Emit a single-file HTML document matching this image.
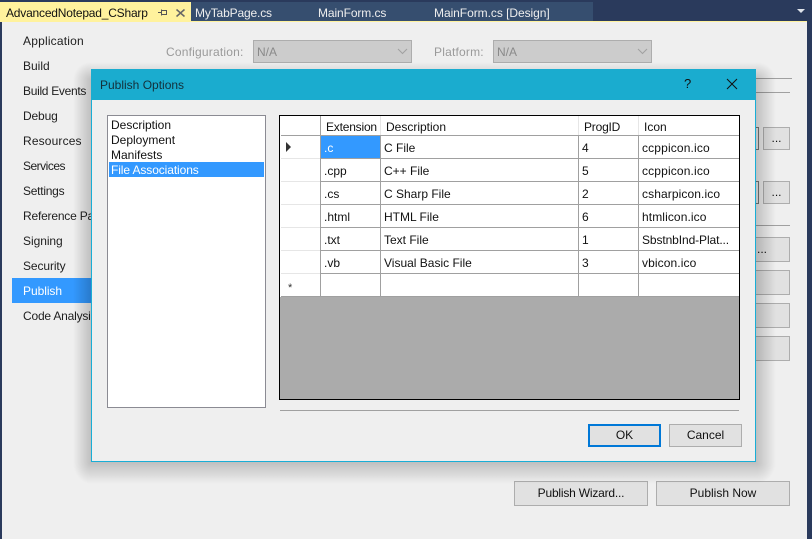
<!DOCTYPE html>
<html><head><meta charset="utf-8">
<style>
html,body{margin:0;padding:0}
body{width:812px;height:539px;overflow:hidden;position:relative;background:#2a3a5c;font:12px "Liberation Sans",sans-serif;color:#1e1e1e;letter-spacing:0}
.a,.a *{box-sizing:border-box}
.a{position:absolute}
.t{position:absolute;white-space:nowrap;line-height:16px;height:16px}
.btn{position:absolute;background:#e1e1e1;border:1px solid #adadad;text-align:center;box-sizing:border-box;color:#111}
.l{position:absolute;background:#a0a0a0}
.d{position:absolute;background:#ccc;border:1px solid #adadad;box-sizing:border-box;color:#8a8a8a;padding:3px 0 0 3px;line-height:16px}
.b{position:absolute;background:#19aed6}
</style></head><body>
<div class="a" style="left:0;top:2px;width:191px;height:20px;background:#fff29d"></div>
<div class="a" style="left:191px;top:2px;width:402px;height:19px;background:#364e6f"></div>
<div class="t" style="left:6px;top:5px;color:#111;letter-spacing:-.2px">AdvancedNotepad_CSharp</div>
<svg class="a" style="left:156px;top:6px" width="32" height="14"><path d="M2 6.500H5M5.500 3.500V9.500M5.500 4.500H10.500V8.500H5.500" fill="none" stroke="#555" stroke-width="1"/><path d="M20.500 3.500L28.500 10.500M28.500 3.500L20.500 10.500" stroke="#666" stroke-width="1.500" fill="none"/></svg>
<div class="t" style="left:195px;top:5px;color:#eee;letter-spacing:-.15px">MyTabPage.cs</div>
<div class="t" style="left:318px;top:5px;color:#eee;letter-spacing:-.1px">MainForm.cs</div>
<div class="t" style="left:434px;top:5px;color:#eee;letter-spacing:-.05px">MainForm.cs [Design]</div>
<svg class="a" style="left:797px;top:9px" width="10" height="6"><path d="M0 0H8L4 4Z" fill="#dfe3ea"/></svg>

<div class="a" style="left:2px;top:21px;width:805px;height:518px;background:#efefef"></div>
<div class="a" style="left:2px;top:21px;width:805px;height:1px;background:#fff29d"></div>

<div class="a" style="left:12px;top:278px;width:90px;height:25px;background:#39f"></div>
<div class="t" style="left:23px;top:33px;letter-spacing:.2px">Application</div>
<div class="t" style="left:23px;top:58px">Build</div>
<div class="t" style="left:23px;top:83px;letter-spacing:-.3px">Build Events</div>
<div class="t" style="left:23px;top:108px;letter-spacing:-.15px">Debug</div>
<div class="t" style="left:23px;top:133px;letter-spacing:.15px">Resources</div>
<div class="t" style="left:23px;top:158px;letter-spacing:-.5px">Services</div>
<div class="t" style="left:23px;top:183px;letter-spacing:-.25px">Settings</div>
<div class="t" style="left:23px;top:208px;letter-spacing:-.2px">Reference Paths</div>
<div class="t" style="left:23px;top:233px;letter-spacing:-.05px">Signing</div>
<div class="t" style="left:23px;top:258px;letter-spacing:-.1px">Security</div>
<div class="t" style="left:23px;top:283px;color:#fff;letter-spacing:-.05px">Publish</div>
<div class="t" style="left:23px;top:308px;letter-spacing:-.2px">Code Analysis</div>

<div class="t" style="left:166px;top:44px;color:#9a9a9a;letter-spacing:.2px">Configuration:</div>
<div class="d" style="left:253px;top:40px;width:159px;height:23px">N/A</div>
<svg class="a" style="left:397px;top:48px" width="12" height="8"><path d="M1 1L5.500 5.500L10 1" stroke="#a0a0a0" fill="none"/></svg>
<div class="t" style="left:434px;top:44px;color:#9a9a9a;letter-spacing:.2px">Platform:</div>
<div class="d" style="left:493px;top:40px;width:159px;height:23px">N/A</div>
<svg class="a" style="left:637px;top:48px" width="12" height="8"><path d="M1 1L5.500 5.500L10 1" stroke="#a0a0a0" fill="none"/></svg>

<div class="l" style="left:700px;top:78px;width:92px;height:1px"></div>
<div class="l" style="left:700px;top:92px;width:90px;height:1px"></div>
<div class="a" style="left:700px;top:127px;width:59px;height:23px;border:1px solid #7a7a7a;background:#efefef"></div>
<div class="a" style="left:700px;top:181px;width:59px;height:23px;border:1px solid #7a7a7a;background:#efefef"></div>
<div class="btn" style="left:763px;top:127px;width:27px;height:23px;line-height:20px">...</div>
<div class="btn" style="left:763px;top:181px;width:27px;height:23px;line-height:20px">...</div>
<div class="l" style="left:700px;top:225px;width:90px;height:1px"></div>
<div class="btn" style="left:700px;top:237px;width:90px;height:25px;line-height:23px;text-align:right;padding-right:22px">...</div>
<div class="btn" style="left:700px;top:270px;width:90px;height:25px"></div>
<div class="btn" style="left:700px;top:303px;width:90px;height:25px"></div>
<div class="btn" style="left:700px;top:336px;width:90px;height:25px"></div>

<div class="btn" style="left:514px;top:481px;width:134px;height:25px;line-height:23px;letter-spacing:-.2px">Publish Wizard...</div>
<div class="btn" style="left:656px;top:481px;width:134px;height:25px;line-height:23px">Publish Now</div>

<!-- dialog shadow, drawn with gradients -->
<div class="a" style="left:73px;top:80px;width:18px;height:382px;background:linear-gradient(to right,rgba(0,0,0,0),rgba(0,0,0,.2))"></div>
<div class="a" style="left:756px;top:80px;width:20px;height:382px;background:linear-gradient(to left,rgba(0,0,0,0),rgba(0,0,0,.2))"></div>
<div class="a" style="left:91px;top:462px;width:665px;height:22px;background:linear-gradient(to top,rgba(0,0,0,0),rgba(0,0,0,.2))"></div>
<div class="a" style="left:91px;top:62px;width:665px;height:7px;background:linear-gradient(to bottom,rgba(0,0,0,0),rgba(0,0,0,.07))"></div>
<div class="a" style="left:73px;top:62px;width:18px;height:18px;background:radial-gradient(ellipse 18px 18px at 100% 100%,rgba(0,0,0,.2),rgba(0,0,0,0))"></div>
<div class="a" style="left:756px;top:62px;width:20px;height:18px;background:radial-gradient(ellipse 20px 18px at 0 100%,rgba(0,0,0,.2),rgba(0,0,0,0))"></div>
<div class="a" style="left:73px;top:462px;width:18px;height:22px;background:radial-gradient(ellipse 18px 22px at 100% 0,rgba(0,0,0,.2),rgba(0,0,0,0))"></div>
<div class="a" style="left:756px;top:462px;width:20px;height:22px;background:radial-gradient(ellipse 20px 22px at 0 0,rgba(0,0,0,.2),rgba(0,0,0,0))"></div>

<!-- dialog -->
<div class="a" style="left:91px;top:69px;width:665px;height:393px;background:#efefef"></div>
<div class="b" style="left:91px;top:69px;width:1px;height:393px"></div>
<div class="b" style="left:755px;top:69px;width:1px;height:393px"></div>
<div class="b" style="left:91px;top:461px;width:665px;height:1px"></div>
<div class="a" style="left:91px;top:69px;width:665px;height:31px;background:#1aaccf"></div>
<div class="t" style="left:100px;top:77px;color:#14303a">Publish Options</div>
<div class="t" style="left:684px;top:76px;color:#111;font-size:13px">?</div>
<svg class="a" style="left:726px;top:78px" width="12" height="12"><path d="M1 1L11 11M11 1L1 11" stroke="#111" stroke-width="1" fill="none"/></svg>

<div class="a" style="left:107px;top:115px;width:159px;height:293px;background:#fff;border:1px solid #8b8b93"></div>
<div class="a" style="left:109px;top:162px;width:155px;height:15px;background:#39f"></div>
<div class="t" style="left:111px;top:118px;color:#111;line-height:15px">Description</div>
<div class="t" style="left:111px;top:133px;color:#111;line-height:15px">Deployment</div>
<div class="t" style="left:111px;top:148px;color:#111;line-height:15px">Manifests</div>
<div class="t" style="left:111px;top:163px;color:#fff;line-height:15px;letter-spacing:-.1px">File Associations</div>

<!-- grid -->
<div class="a" style="left:279px;top:115px;width:461px;height:285px;background:#ababab;border:1px solid #000"></div>
<div class="a" style="left:280px;top:116px;width:459px;height:181px;background:#fff"></div>
<div class="l" style="left:281px;top:135px;width:458px;height:1px"></div>
<div class="l" style="left:321px;top:158px;width:418px;height:1px"></div>
<div class="l" style="left:321px;top:181px;width:418px;height:1px"></div>
<div class="l" style="left:321px;top:204px;width:418px;height:1px"></div>
<div class="l" style="left:321px;top:227px;width:418px;height:1px"></div>
<div class="l" style="left:321px;top:250px;width:418px;height:1px"></div>
<div class="l" style="left:321px;top:273px;width:418px;height:1px"></div>
<div class="l" style="left:281px;top:296px;width:458px;height:1px"></div>
<div class="a" style="left:281px;top:158px;width:39px;height:1px;background:#e6e6e6"></div>
<div class="a" style="left:281px;top:181px;width:39px;height:1px;background:#e6e6e6"></div>
<div class="a" style="left:281px;top:204px;width:39px;height:1px;background:#e6e6e6"></div>
<div class="a" style="left:281px;top:227px;width:39px;height:1px;background:#e6e6e6"></div>
<div class="a" style="left:281px;top:250px;width:39px;height:1px;background:#e6e6e6"></div>
<div class="a" style="left:281px;top:273px;width:39px;height:1px;background:#e6e6e6"></div>
<div class="l" style="left:320px;top:116px;width:1px;height:181px"></div>
<div class="l" style="left:380px;top:136px;width:1px;height:161px"></div>
<div class="l" style="left:578px;top:136px;width:1px;height:161px"></div>
<div class="l" style="left:638px;top:136px;width:1px;height:161px"></div>
<div class="a" style="left:380px;top:116px;width:1px;height:19px;background:#e6e6e6"></div>
<div class="a" style="left:578px;top:116px;width:1px;height:19px;background:#e6e6e6"></div>
<div class="a" style="left:638px;top:116px;width:1px;height:19px;background:#e6e6e6"></div>
<div class="a" style="left:321px;top:136px;width:59px;height:22px;background:#39f"></div>
<svg class="a" style="left:285px;top:141px" width="8" height="12"><path d="M1 1L6 6L1 11Z" fill="#333"/></svg>
<div class="t" style="left:288px;top:280px;font-size:11px;color:#333">*</div>

<div class="t" style="left:326px;top:119px;color:#111;letter-spacing:-.2px">Extension</div>
<div class="t" style="left:386px;top:119px;color:#111">Description</div>
<div class="t" style="left:584px;top:119px;color:#111;letter-spacing:-.2px">ProgID</div>
<div class="t" style="left:644px;top:119px;color:#111">Icon</div>

<div class="t" style="left:324px;top:140px;color:#fff">.c</div>
<div class="t" style="left:384px;top:140px;color:#111">C File</div>
<div class="t" style="left:582px;top:140px;color:#111">4</div>
<div class="t" style="left:642px;top:140px;color:#111;letter-spacing:.15px">ccppicon.ico</div>

<div class="t" style="left:324px;top:163px;color:#111">.cpp</div>
<div class="t" style="left:384px;top:163px;color:#111">C++ File</div>
<div class="t" style="left:582px;top:163px;color:#111">5</div>
<div class="t" style="left:642px;top:163px;color:#111;letter-spacing:.15px">ccppicon.ico</div>

<div class="t" style="left:324px;top:186px;color:#111">.cs</div>
<div class="t" style="left:384px;top:186px;color:#111">C Sharp File</div>
<div class="t" style="left:582px;top:186px;color:#111">2</div>
<div class="t" style="left:642px;top:186px;color:#111;letter-spacing:.1px">csharpicon.ico</div>

<div class="t" style="left:324px;top:209px;color:#111">.html</div>
<div class="t" style="left:384px;top:209px;color:#111">HTML File</div>
<div class="t" style="left:582px;top:209px;color:#111">6</div>
<div class="t" style="left:642px;top:209px;color:#111;letter-spacing:.1px">htmlicon.ico</div>

<div class="t" style="left:324px;top:232px;color:#111">.txt</div>
<div class="t" style="left:384px;top:232px;color:#111">Text File</div>
<div class="t" style="left:582px;top:232px;color:#111">1</div>
<div class="t" style="left:642px;top:232px;color:#111;letter-spacing:-.1px">SbstnbInd-Plat...</div>

<div class="t" style="left:324px;top:255px;color:#111">.vb</div>
<div class="t" style="left:384px;top:255px;color:#111">Visual Basic File</div>
<div class="t" style="left:582px;top:255px;color:#111">3</div>
<div class="t" style="left:642px;top:255px;color:#111;letter-spacing:.1px">vbicon.ico</div>

<div class="l" style="left:280px;top:410px;width:459px;height:1px"></div>
<div class="btn" style="left:588px;top:424px;width:73px;height:23px;border:2px solid #0078d7;line-height:19px">OK</div>
<div class="btn" style="left:669px;top:424px;width:73px;height:23px;line-height:21px">Cancel</div>
</body></html>
